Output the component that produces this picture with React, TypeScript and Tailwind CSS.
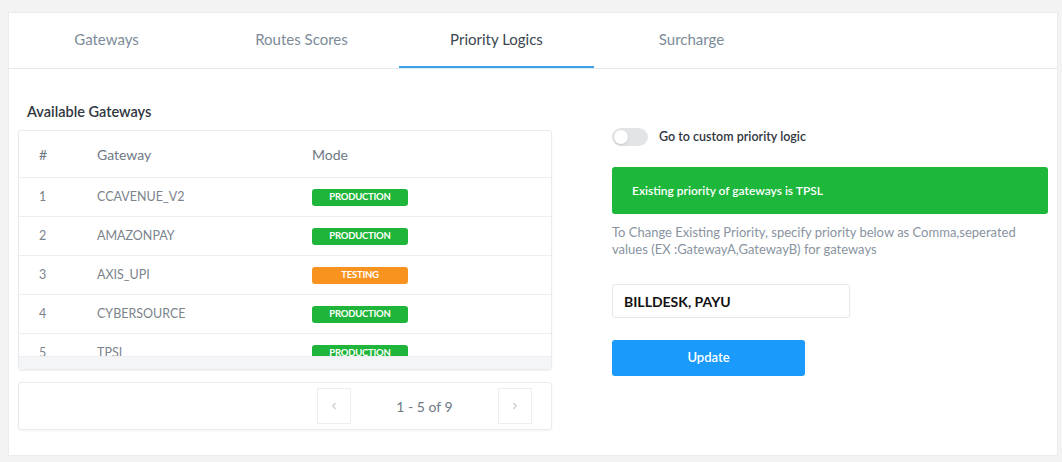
import React, { useState } from "react";
import { ChevronLeft, ChevronRight } from "lucide-react";

const tabs = ["Gateways", "Routes Scores", "Priority Logics", "Surcharge"];

const gateways = [
  { id: 1, name: "CCAVENUE_V2", mode: "PRODUCTION" },
  { id: 2, name: "AMAZONPAY", mode: "PRODUCTION" },
  { id: 3, name: "AXIS_UPI", mode: "TESTING" },
  { id: 4, name: "CYBERSOURCE", mode: "PRODUCTION" },
  { id: 5, name: "TPSL", mode: "PRODUCTION" },
];

const ModeBadge: React.FC<{ mode: string }> = ({ mode }) => (
  <span
    className={
      "inline-flex items-center justify-center w-[96px] h-[17px] rounded-[3px] text-[9.5px] font-bold text-white tracking-tight " +
      (mode === "TESTING" ? "bg-[#f8931f]" : "bg-[#1fb53a]")
    }
  >
    {mode}
  </span>
);

const App: React.FC = () => {
  const [activeTab, setActiveTab] = useState(2);
  const [custom, setCustom] = useState(false);
  const [priority, setPriority] = useState("BILLDESK, PAYU");

  return (
    <div
      className="min-h-screen bg-[#f3f3f3] pt-[12px] pl-[8px] pr-[4px] pb-[6px]"
      style={{ fontFamily: "Lato, 'Open Sans', sans-serif" }}
    >
      <div className="bg-white border border-[#ececec] h-[444px] flex flex-col">
        {/* Tabs */}
        <div className="flex h-[56px] border-b border-[#e6e9ec] shrink-0">
          {tabs.map((tab, i) => (
            <button
              key={tab}
              onClick={() => setActiveTab(i)}
              className={
                "w-[195px] h-full flex items-center justify-center text-[15px] border-b-2 -mb-px " +
                (i === activeTab
                  ? "border-[#3da3e8] text-[#3b4651]"
                  : "border-transparent text-[#7d8b99]")
              }
            >
              {tab}
            </button>
          ))}
        </div>

        {/* Content */}
        <div className="flex flex-1 pl-[9px] pr-[9px]">
          {/* Left column */}
          <div className="w-[534px] shrink-0 flex flex-col">
            <h3 className="text-[14.5px] font-semibold text-[#2f3640] mt-[33px] ml-[9px] h-[19px] leading-[19px]">
              Available Gateways
            </h3>
            <div className="mt-[9px] border border-[#e9ebee] rounded-[3px] shadow-[0_1px_2px_rgba(0,0,0,0.06)] overflow-hidden">
              <div className="h-[225px] overflow-hidden">
                <div className="flex items-center h-[47px] border-b border-[#eceef1] text-[14px] text-[#6e7884]">
                  <div className="w-[78px] pl-[20px]">#</div>
                  <div className="w-[215px]">Gateway</div>
                  <div>Mode</div>
                </div>
                {gateways.map((g) => (
                  <div
                    key={g.id}
                    className="flex items-center h-[39px] border-b border-[#eceef1] text-[12.5px] text-[#7b838c]"
                  >
                    <div className="w-[78px] pl-[20px]">{g.id}</div>
                    <div className="w-[215px]">{g.name}</div>
                    <div className="flex items-center">
                      <ModeBadge mode={g.mode} />
                    </div>
                  </div>
                ))}
              </div>
              <div className="h-[13px] bg-[#f4f5f6] border-t border-[#eceef1]" />
            </div>

            {/* Pagination */}
            <div className="mt-[12px] h-[48px] border border-[#e9ebee] rounded-[3px] shadow-[0_1px_2px_rgba(0,0,0,0.05)] flex items-center justify-end pr-[19px]">
              <button className="w-[34px] h-[36px] border border-[#eceef1] flex items-center justify-center text-[#c9ced4]">
                <ChevronLeft size={10} strokeWidth={3} />
              </button>
              <span className="w-[147px] text-center text-[14px] text-[#6e7884]">
                1 - 5 of 9
              </span>
              <button className="w-[34px] h-[36px] border border-[#eceef1] flex items-center justify-center text-[#c9ced4]">
                <ChevronRight size={10} strokeWidth={3} />
              </button>
            </div>
          </div>

          {/* Right column */}
          <div className="flex-1 pl-[60px] flex flex-col">
            <div className="flex items-center mt-[59px] h-[18px]">
              <button
                onClick={() => setCustom(!custom)}
                className={
                  "relative w-[36px] h-[18px] rounded-full transition-colors " +
                  (custom ? "bg-[#1a9bfc]" : "bg-[#e3e4e6]")
                }
              >
                <span
                  className={
                    "absolute top-[2px] w-[14px] h-[14px] rounded-full bg-white shadow-sm transition-all " +
                    (custom ? "left-[20px]" : "left-[2px]")
                  }
                />
              </button>
              <span className="ml-[11px] text-[12.5px] font-semibold text-[#2f3640]">
                Go to custom priority logic
              </span>
            </div>

            <div className="mt-[21px] h-[47px] w-[436px] rounded-[3px] bg-[#1db73b] flex items-center pl-[20px] text-[12px] font-semibold text-white">
              Existing priority of gateways is TPSL
            </div>

            <p className="mt-[10px] w-[410px] text-[13px] leading-[17px] text-[#8993a0]">
              To Change Existing Priority, specify priority below as Comma,seperated
              values (EX :GatewayA,GatewayB) for gateways
            </p>

            <input
              value={priority}
              onChange={(e) => setPriority(e.target.value)}
              className="mt-[26px] w-[238px] h-[34px] border border-[#e6e8eb] rounded-[3px] px-[11px] text-[14px] font-bold text-[#111] outline-none"
            />

            <button className="mt-[22px] w-[193px] h-[36px] rounded-[3px] bg-[#1a9bfc] text-white text-[13px] font-semibold">
              Update
            </button>
          </div>
        </div>
      </div>
    </div>
  );
};

export default App;
